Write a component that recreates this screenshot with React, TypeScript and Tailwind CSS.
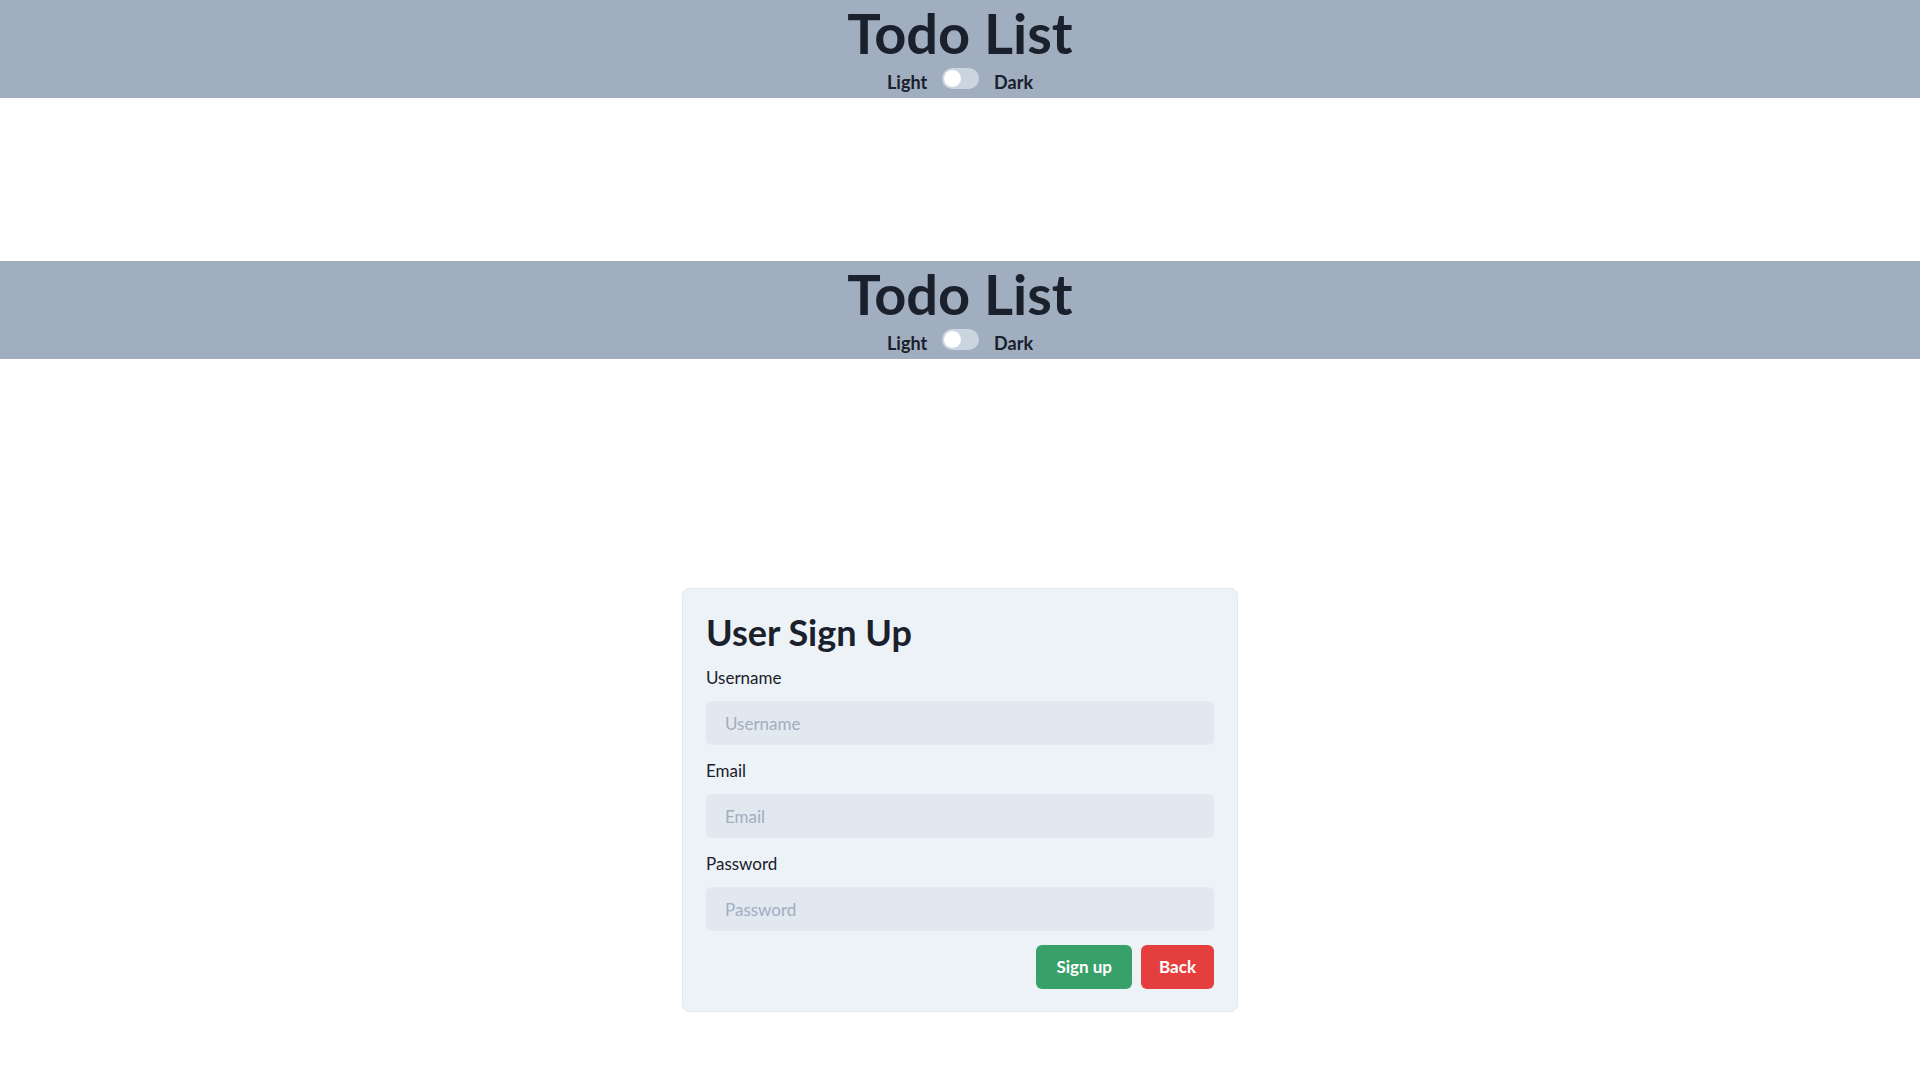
import React from "react";

function Header() {
  return (
    <div className="h-[98px] bg-[#A0AEC0] flex flex-col items-center text-[#1A202C]">
      <h1 className="text-[56px] leading-[65px] font-bold">Todo List</h1>
      <div className="h-[33px] flex items-center gap-[15px]">
        <span className="text-[18px] leading-[26px] font-bold">Light</span>
        <div className="w-[37px] h-[21px] rounded-full bg-[#CBD5E0] p-[2px] mb-[6px] flex items-center">
          <div className="w-[17px] h-[17px] rounded-full bg-white" />
        </div>
        <span className="text-[18px] leading-[26px] font-bold">Dark</span>
      </div>
    </div>
  );
}

function Field({ label, type }: { label: string; type: string }) {
  return (
    <div className="flex flex-col">
      <label className="text-[17px] leading-[26px] mb-[10px] text-[#1A202C]">{label}</label>
      <input
        type={type}
        placeholder={label}
        className="h-[44px] w-full rounded-[6px] bg-[#E2E8F0] pl-[19px] pr-4 text-[17px] text-[#1A202C] placeholder:text-[#A0AEC0] outline-none"
      />
    </div>
  );
}

export default function App() {
  return (
    <div className="min-h-screen bg-white" style={{ fontFamily: "Lato, 'Noto Sans', sans-serif" }}>
      <Header />
      <div className="h-[163px]" />
      <Header />
      <div className="pt-[229px] flex justify-center">
        <div className="w-[556px] rounded-lg border border-[#E2E8F0] bg-[#EDF2F7] px-[23px] pt-[23px] pb-[22px]">
          <h2 className="text-[36px] leading-[40px] font-bold text-[#1A202C] mb-[13px]">User Sign Up</h2>
          <div className="flex flex-col gap-[13px]">
            <Field label="Username" type="text" />
            <Field label="Email" type="email" />
            <Field label="Password" type="password" />
          </div>
          <div className="flex justify-end gap-[9px] mt-[14px]">
            <button className="h-[44px] px-[20px] rounded-[6px] bg-[#38A169] text-white text-[17px] font-bold">Sign up</button>
            <button className="h-[44px] px-[18px] rounded-[6px] bg-[#E53E3E] text-white text-[17px] font-bold">Back</button>
          </div>
        </div>
      </div>
    </div>
  );
}
